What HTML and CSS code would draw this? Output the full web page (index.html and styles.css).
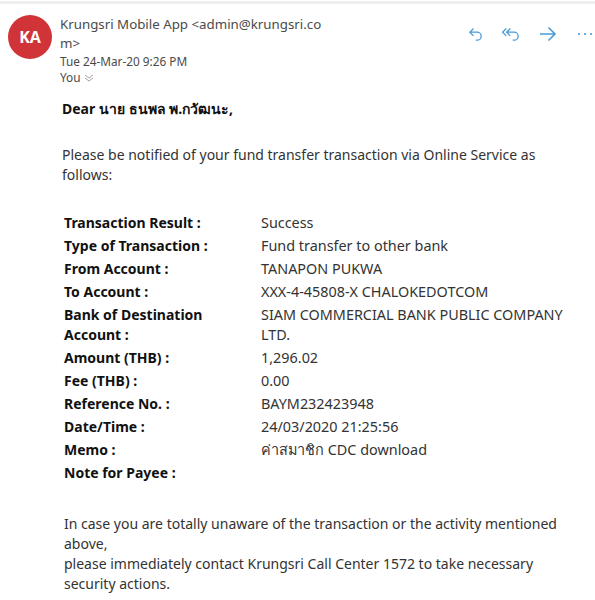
FILE: index.html
```html
<!DOCTYPE html>
<html>
<head>
<meta charset="utf-8">
<link rel="stylesheet" href="styles.css">
</head>
<body>
<div class="topline"></div>
<header class="head">
  <div class="avatar">KA</div>
  <div class="meta">
    <div class="from">Krungsri Mobile App &lt;admin@krungsri.co<br>m&gt;</div>
    <div class="date">Tue 24-Mar-20 9:26 PM</div>
    <div class="to">You <svg class="chev" width="10" height="8" viewBox="0 0 10 8"><path d="M1 1l4 3 4-3M1 4l4 3 4-3" fill="none" stroke="#999" stroke-width="0.9"/></svg></div>
  </div>
  <div class="actions">
    <svg class="ic" width="16" height="16" viewBox="0 0 16 16"><path d="M5.5 2.5L1.8 6.2l3.7 3.7M2 6.2h7.2a4 4 0 0 1 0 8h-1.5" fill="none" stroke="#4a9cd6" stroke-width="1.3"/></svg>
    <svg class="ic ic2" width="20" height="16" viewBox="0 0 20 16"><path d="M5.3 2.5L1.6 6.2l3.7 3.7M9.3 2.5L5.6 6.2l3.7 3.7M6 6.2h7.2a4 4 0 0 1 0 8h-1.5" fill="none" stroke="#4a9cd6" stroke-width="1.3"/></svg>
    <svg class="ic ic3" width="18" height="16" viewBox="0 0 18 16"><path d="M1 8h15M9.5 1.5L16 8l-6.5 6.5" fill="none" stroke="#4a9cd6" stroke-width="1.6"/></svg>
    <svg class="ic ic4" width="16" height="16" viewBox="0 0 16 16"><circle cx="2" cy="8" r="1.1" fill="#4a9cd6"/><circle cx="8" cy="8" r="1.1" fill="#4a9cd6"/><circle cx="14" cy="8" r="1.1" fill="#4a9cd6"/></svg>
  </div>
</header>
<main class="body">
  <p class="dear"><b>Dear นาย ธนพล พ.กวัฒนะ,</b></p>
  <p class="intro">Please be notified of your fund transfer transaction via Online Service as follows:</p>
  <table class="tx">
    <tr><th>Transaction Result :</th><td>Success</td></tr>
    <tr><th>Type of Transaction :</th><td>Fund transfer to other bank</td></tr>
    <tr><th>From Account :</th><td>TANAPON PUKWA</td></tr>
    <tr><th>To Account :</th><td>XXX-4-45808-X CHALOKEDOTCOM</td></tr>
    <tr><th>Bank of Destination Account :</th><td>SIAM COMMERCIAL BANK PUBLIC COMPANY LTD.</td></tr>
    <tr><th>Amount (THB) :</th><td>1,296.02</td></tr>
    <tr><th>Fee (THB) :</th><td>0.00</td></tr>
    <tr><th>Reference No. :</th><td>BAYM232423948</td></tr>
    <tr><th>Date/Time :</th><td>24/03/2020 21:25:56</td></tr>
    <tr><th>Memo :</th><td>ค่าสมาชิก CDC download</td></tr>
    <tr><th>Note for Payee :</th><td></td></tr>
  </table>
  <p class="outro">In case you are totally unaware of the transaction or the activity mentioned above,<br>please immediately contact Krungsri Call Center 1572 to take necessary security actions.</p>
</main>
</body>
</html>
```
FILE: styles.css
```css
html, body {
  margin: 0;
  padding: 0;
  background: #fff;
}
body {
  font-family: "Noto Sans", "Open Sans", sans-serif;
  color: #252423;
  width: 595px;
  overflow: hidden;
}
.topline {
  height: 3px;
  margin-top: 1px;
  background: #f1efed;
}
.head {
  display: flex;
  align-items: flex-start;
  padding: 11px 0 0 8px;
}
.avatar {
  width: 44px;
  height: 44px;
  border-radius: 50%;
  background: #d13438;
  color: #fff;
  font-family: "Open Sans", sans-serif;
  font-weight: 700;
  font-size: 16px;
  display: flex;
  align-items: center;
  justify-content: center;
  flex: none;
}
.meta {
  margin-left: 8px;
  width: 290px;
  color: #4a4a4a;
}
.from {
  font-size: 13.3px;
  line-height: 19px;
}
.date, .to {
  font-size: 11.8px;
  line-height: 17px;
}
.to {
  display: flex;
  align-items: center;
  gap: 3px;
  margin-top: -1px;
}
.chev { margin-top: 1px; }
.actions {
  display: flex;
  align-items: center;
  margin-left: 118px;
  margin-top: 11px;
}
.ic { display: block; }
.ic2 { margin-left: 17px; }
.ic3 { margin-left: 18px; }
.ic4 { margin-left: 20px; }
.body {
  padding: 0 0 0 62px;
  font-size: 14px;
  color: #333;
}
.dear {
  margin: 13px 0 0;
  line-height: 20px;
  color: #111;
}
.intro {
  margin: 26px 0 0;
  line-height: 20px;
  width: 490px;
}
.tx {
  border-collapse: collapse;
  margin: 28px 0 0 2px;
}
.tx th {
  text-align: left;
  font-weight: 700;
  color: #111;
  width: 185px;
  padding: 0 12px 3px 0;
  vertical-align: top;
  line-height: 20px;
}
.tx td {
  vertical-align: top;
  line-height: 20px;
  padding: 0 0 3px 0;
  width: 320px;
  font-size: 14.4px;
}
.outro {
  margin: 28px 0 0 2px;
  line-height: 20px;
  width: 500px;
}
```
